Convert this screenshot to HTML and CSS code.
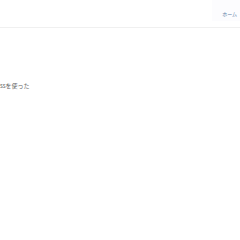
FILE: index.html
```html
<!DOCTYPE html>
<html lang="ja">
<head>
  <meta charset="UTF-8">
  <meta name="viewport" content="width=device-width, initial-scale=1">
  <title>ホーム</title>
  <link rel="stylesheet" href="styles.css">
</head>
<body>
  <header class="site-header">
    <nav class="nav">
      <a href="#" class="nav-link">ホーム</a>
    </nav>
  </header>

  <main class="content">
    <p class="lead">ssを使った</p>
  </main>
</body>
</html>
```

FILE: styles.css
```css
* { box-sizing: border-box; }

body {
  margin: 0;
  font-family: "Noto Sans CJK JP", "Noto Sans", sans-serif;
  background: #fff;
  color: #555;
}

.site-header {
  height: 28px;
  border-bottom: 1px solid #f0f0f0;
  display: flex;
  justify-content: flex-end;
  align-items: flex-start;
}

.nav {
  display: flex;
  height: 21px;
  background: #fcfcfe;
}

.nav-link {
  display: block;
  padding: 10px 3px 0 10px;
  font-size: 5px;
  line-height: 7px;
  color: #5b7ea6;
  text-decoration: none;
}

.content {
  padding-top: 54px;
}

.lead {
  margin: 0;
  font-size: 6px;
  line-height: 8px;
  color: #666;
}
```
